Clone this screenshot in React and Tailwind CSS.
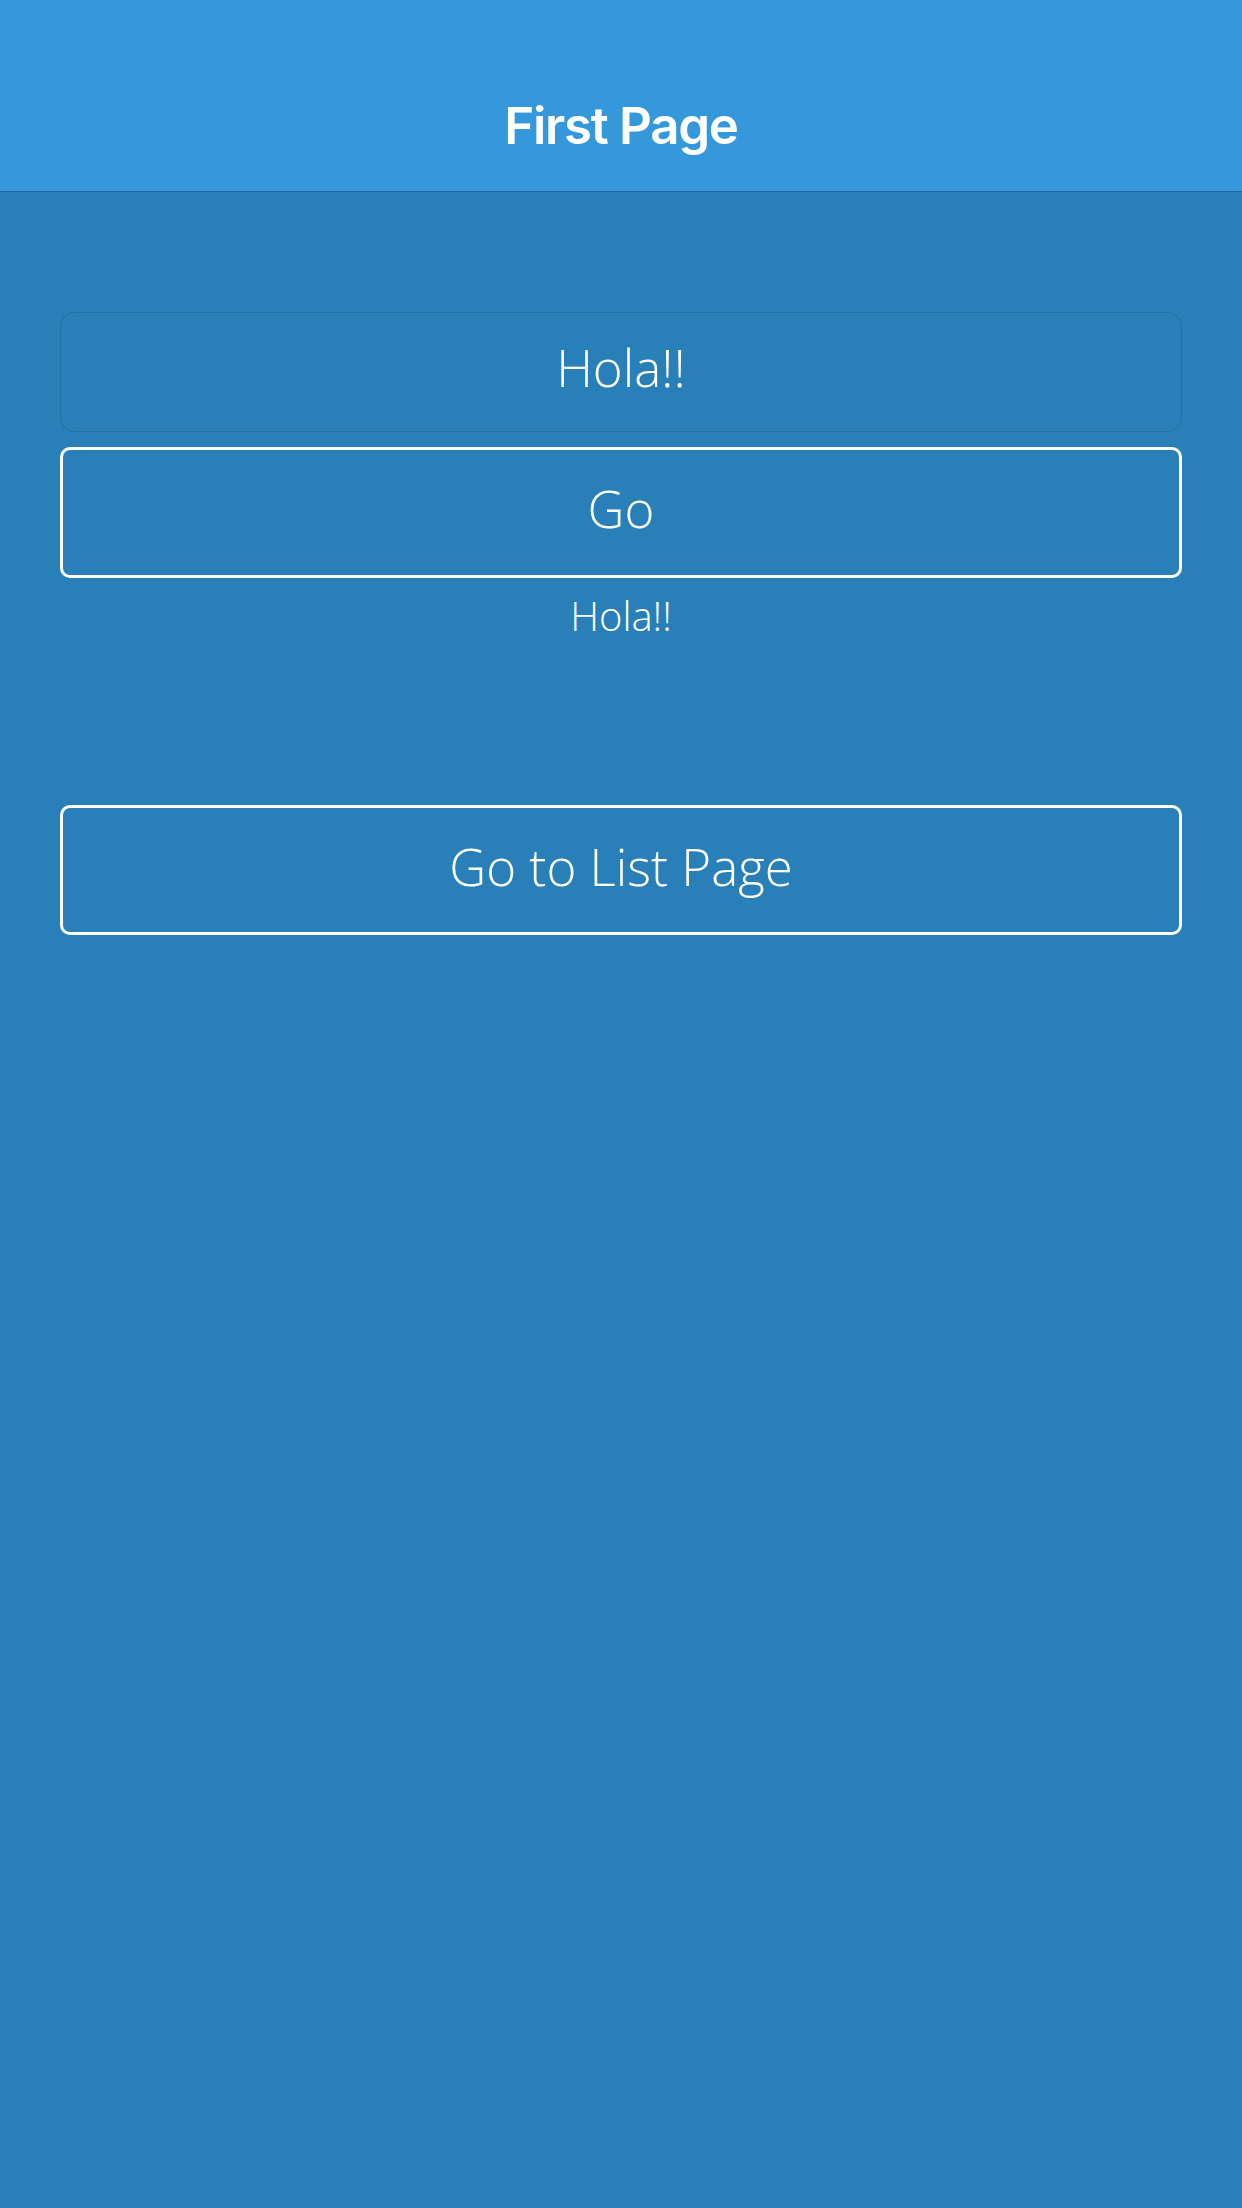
const App = () => {
  return (
    <div className="min-h-screen bg-[#2980b9]" style={{ fontFamily: '"Open Sans", "Noto Sans", sans-serif' }}>
      {/* Nav bar */}
      <div className="h-[192px] bg-[#3598db] border-b border-[#1f6596] pt-[60px] flex items-center justify-center">
        <h1 className="text-[51px] leading-none font-semibold text-white tracking-tight" style={{ fontFamily: 'Inter, "Liberation Sans", sans-serif' }}>
          First Page
        </h1>
      </div>

      {/* Content */}
      <div className="px-[60px] pt-[120px] flex flex-col">
        <div className="h-[120px] pb-[10px] rounded-[15px] border border-[#2370a5] flex items-center justify-center">
          <span className="text-[51px] font-light text-white leading-none">Hola!!</span>
        </div>

        <button className="mt-[15px] h-[131px] pb-[8px] rounded-[10px] border-[3px] border-white flex items-center justify-center text-[51px] font-light text-white leading-none">
          Go
        </button>

        <p className="mt-[14px] text-center text-[40px] font-light text-white leading-[48px]">Hola!!</p>

        <button className="mt-[165px] h-[130px] pb-[8px] rounded-[10px] border-[3px] border-white flex items-center justify-center text-[51px] font-light text-white leading-none">
          Go to List Page
        </button>
      </div>
    </div>
  );
};

export default App;
